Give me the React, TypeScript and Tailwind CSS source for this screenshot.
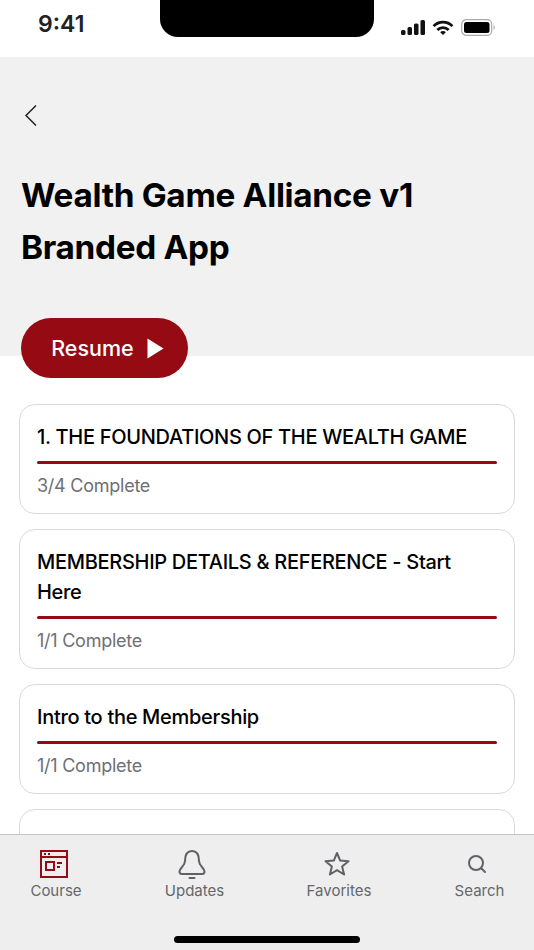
const F = "font-['Inter','Liberation_Sans',sans-serif]";

const sections = [
  { title: "1. THE FOUNDATIONS OF THE WEALTH GAME", done: "3/4 Complete" },
  { title: "MEMBERSHIP DETAILS & REFERENCE - Start Here", done: "1/1 Complete" },
  { title: "Intro to the Membership", done: "1/1 Complete" },
  { title: "zoom CALL RECORDINGS", done: "0/1 Complete" },
];

function SectionCard({ title, done }: { title: string; done: string }) {
  return (
    <div className="rounded-[16px] border border-[#d9d9d9] bg-white px-[17px] pt-[17px] pb-[14px]">
      <p className="text-[20px] leading-[30px] font-medium text-black tracking-[-0.3px]">{title}</p>
      <div className="mt-[9px] h-[3px] rounded-full bg-[#960a14]" />
      <p className="mt-[9px] text-[18px] leading-[26px] tracking-[-0.25px] text-[#6f7074]">{done}</p>
    </div>
  );
}

function TabIcon({ children }: { children: React.ReactNode }) {
  return (
    <svg className="-ml-[5px]" width="32" height="32" viewBox="0 0 32 32" fill="none" stroke="#5f6166" strokeWidth="2" strokeLinecap="round" strokeLinejoin="round">
      {children}
    </svg>
  );
}

export default function App() {
  return (
    <div className={`${F} relative flex h-[950px] w-[534px] flex-col overflow-hidden bg-white`}>
      {/* status bar */}
      <div className="flex h-[57px] shrink-0 items-start justify-between bg-white pl-[38px] pr-[39px] pt-[8px]">
        <span className="text-[23px] leading-[32px] font-semibold text-[#222]">9:41</span>
        <div className="mt-[11px] flex items-center gap-[7px]">
          <svg width="24" height="15" viewBox="0 0 24 15" fill="#111">
            <rect x="0" y="10" width="4.500" height="5" rx="1.500" />
            <rect x="6.500" y="7" width="4.500" height="8" rx="1.500" />
            <rect x="13" y="3.500" width="4.500" height="11.500" rx="1.500" />
            <rect x="19.500" y="0" width="4.500" height="15" rx="1.500" />
          </svg>
          <svg width="22" height="16" viewBox="0 0 23 17" fill="none" stroke="#111" strokeWidth="3">
            <path d="M1.500 6.500a14 14 0 0 1 20 0" />
            <path d="M5.500 10.500a8.500 8.500 0 0 1 12 0" />
            <path d="M8.500 13l3 3 3-3a4 4 0 0 0-6 0z" fill="#111" stroke="none" />
          </svg>
          <svg width="34" height="17" viewBox="0 0 34 17" fill="none">
            <rect x="0.700" y="0.700" width="30" height="15.600" rx="4.500" stroke="#aaa" strokeWidth="1.200" />
            <rect x="3" y="3" width="25.500" height="11" rx="2.500" fill="#000" />
            <path d="M32.500 6v5c.8-.4 1.300-1.400 1.300-2.500S33.300 6.400 32.500 6z" fill="#aaa" />
          </svg>
        </div>
      </div>
      <div className="absolute left-[160px] top-0 h-[37px] w-[214px] rounded-b-[18px] bg-black" />

      <main className="min-h-0 flex-1 overflow-hidden">
        {/* header */}
        <div className="h-[299px] bg-[#f1f1f1] pl-[21px]">
          <svg className="ml-[3px] pt-[46px] box-content" width="14" height="24" viewBox="0 0 14 24" fill="none" stroke="#222" strokeWidth="1.500">
            <path d="M12 2.500 2 12.500l10 10" />
          </svg>
          <h1 className="mt-[42px] text-[33.300px] leading-[52px] font-bold tracking-[-0.3px] text-black">
            Wealth Game Alliance v1
            <br />
            Branded App
          </h1>
        </div>

        <button className="relative -mt-[38px] ml-[21px] flex h-[60px] w-[167px] items-center justify-center gap-[13px] rounded-full bg-[#960a14] pl-[6px] text-[21.500px] font-medium text-white">
          Resume
          <svg width="17" height="21" viewBox="0 0 17 21" fill="#fff">
            <path d="M0.500 0.500 16.500 10.500 0.500 20.500z" />
          </svg>
        </button>

        <div className="mt-[26px] flex flex-col gap-[15px] px-[19px]">
          {sections.map((s) => (
            <SectionCard key={s.title} title={s.title} done={s.done} />
          ))}
        </div>
      </main>

      {/* tab bar */}
      <nav className="relative flex h-[116px] shrink-0 items-start border-t border-[#c4c4c4] bg-[#eeeeee] pt-[13px] text-[15px] leading-[22px] text-[#65676b]">
        <div className="flex w-[112px] flex-col items-center">
          <svg className="-ml-[5px] my-[2px]" width="28" height="28" viewBox="0 0 28 28" fill="none" stroke="#960a14" strokeWidth="2">
            <rect x="1" y="1" width="26" height="26" />
            <path d="M1 7h26M4 4h2M8 4h2" />
            <rect x="6" y="12" width="8" height="8" />
            <path d="M17 13h5M17 17h3" />
          </svg>
          <span>Course</span>
        </div>
        <div className="flex w-[165px] flex-col items-center">
          <TabIcon>
            <path d="M9 13c0-6 2.500-10 7-10s7 4 7 10c0 5 5.500 7 5.500 10.500 0 1.500-1 2.500-2.500 2.500H6c-1.500 0-2.500-1-2.500-2.500C3.500 20 9 18 9 13z" />
            <path d="M13.500 30h5" />
          </TabIcon>
          <span>Updates</span>
        </div>
        <div className="flex w-[124px] flex-col items-center">
          <TabIcon>
            <path d="m16 5 3.200 7.600 8.300.6-6.400 5.300 2 8-7.100-4.300-7.100 4.300 2-8-6.400-5.300 8.300-.6z" />
          </TabIcon>
          <span>Favorites</span>
        </div>
        <div className="flex w-[133px] flex-col items-center pl-[24px]">
          <TabIcon>
            <circle cx="15" cy="15" r="7" />
            <path d="m20.500 20.500 3.500 3.500" />
          </TabIcon>
          <span>Search</span>
        </div>
        <div className="absolute bottom-[7px] left-[174px] h-[7px] w-[186px] rounded-full bg-black" />
      </nav>
    </div>
  );
}
